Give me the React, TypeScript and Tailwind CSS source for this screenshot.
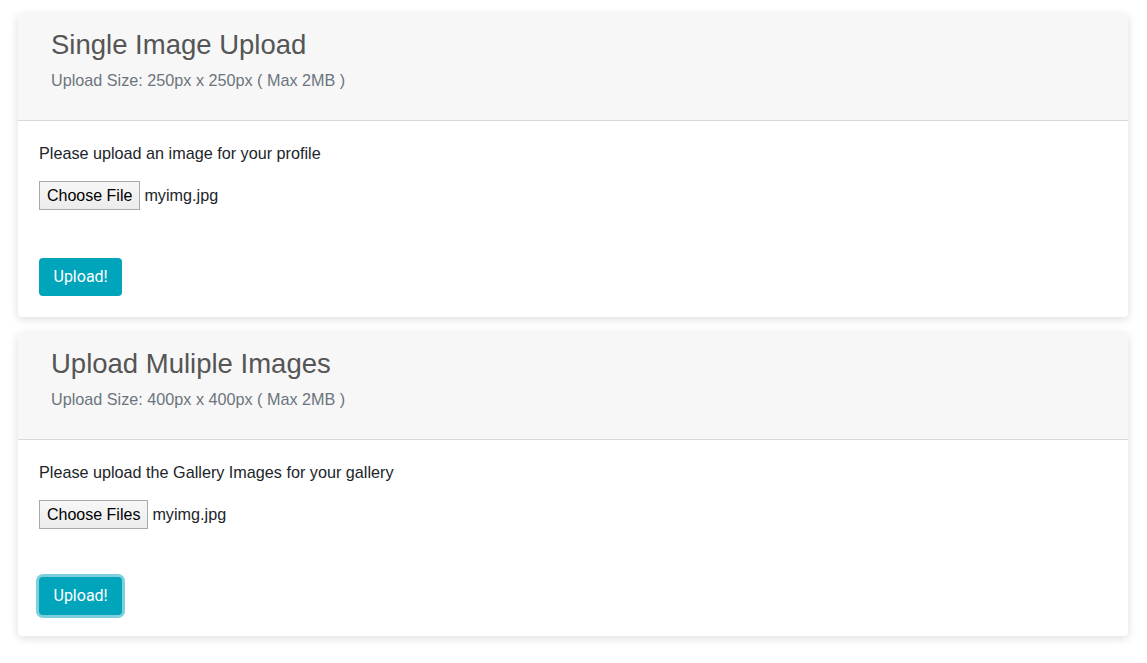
import React from "react";

type UploadCardProps = {
  title: string;
  size: string;
  hint: string;
  chooseLabel: string;
  focused?: boolean;
};

const UploadCard: React.FC<UploadCardProps> = ({title, size, hint, chooseLabel, focused}) => {
  return (
      <div className="w-[1110px] bg-white rounded-[4px] shadow-[0_2px_10px_rgba(0,0,0,0.14)] overflow-hidden">
          <div className="bg-[#f7f7f7] border-b border-[#d9d9d9] pl-[33px] pt-[14px] h-[107px]">
              <h2 className="text-[27.5px] leading-[34px] text-[#555555] font-normal">{title}</h2>
              <p className="mt-[8px] text-[16.2px] leading-[20px] text-[#6c757d]">{size}</p>
          </div>
          <div className="px-[21px] pt-[21px] pb-[21px]">
              <p className="text-[16.2px] leading-[22px] text-[#212529]">{hint}</p>
              <div className="flex items-center mt-[17px] h-[29px]">
                  <span className="h-[29px] px-[7px] flex items-center border border-[#a9a9a9] bg-gradient-to-b from-[#f7f7f7] to-[#ececec] text-[16px] text-black">
                      {chooseLabel}
                  </span>
                  <span className="ml-[4px] text-[16.2px] text-[#212529]">myimg.jpg</span>
              </div>
              <button
                  className={
                      focused
                          ? "mt-[48px] h-[38px] px-[14.5px] rounded-[4px] bg-[#00a4bb] text-white text-[16px] font-['Roboto',sans-serif] ring-[3px] ring-[#7ccfdb]"
                          : "mt-[48px] h-[38px] px-[14.5px] rounded-[4px] bg-[#00a4bb] text-white text-[16px] font-['Roboto',sans-serif]"
                  }
              >
                  Upload!
              </button>
          </div>
      </div>
  );
};

export default function App() {
  return (
      <div className="w-[1147px] h-[663px] bg-white pt-[14px] pl-[18px] flex flex-col gap-[16px] font-['Liberation_Sans',sans-serif]">
          <UploadCard
              title="Single Image Upload"
              size="Upload Size: 250px x 250px ( Max 2MB )"
              hint="Please upload an image for your profile"
              chooseLabel="Choose File"
          />
          <UploadCard
              title="Upload Muliple Images"
              size="Upload Size: 400px x 400px ( Max 2MB )"
              hint="Please upload the Gallery Images for your gallery"
              chooseLabel="Choose Files"
              focused
          />
      </div>
  );
}
